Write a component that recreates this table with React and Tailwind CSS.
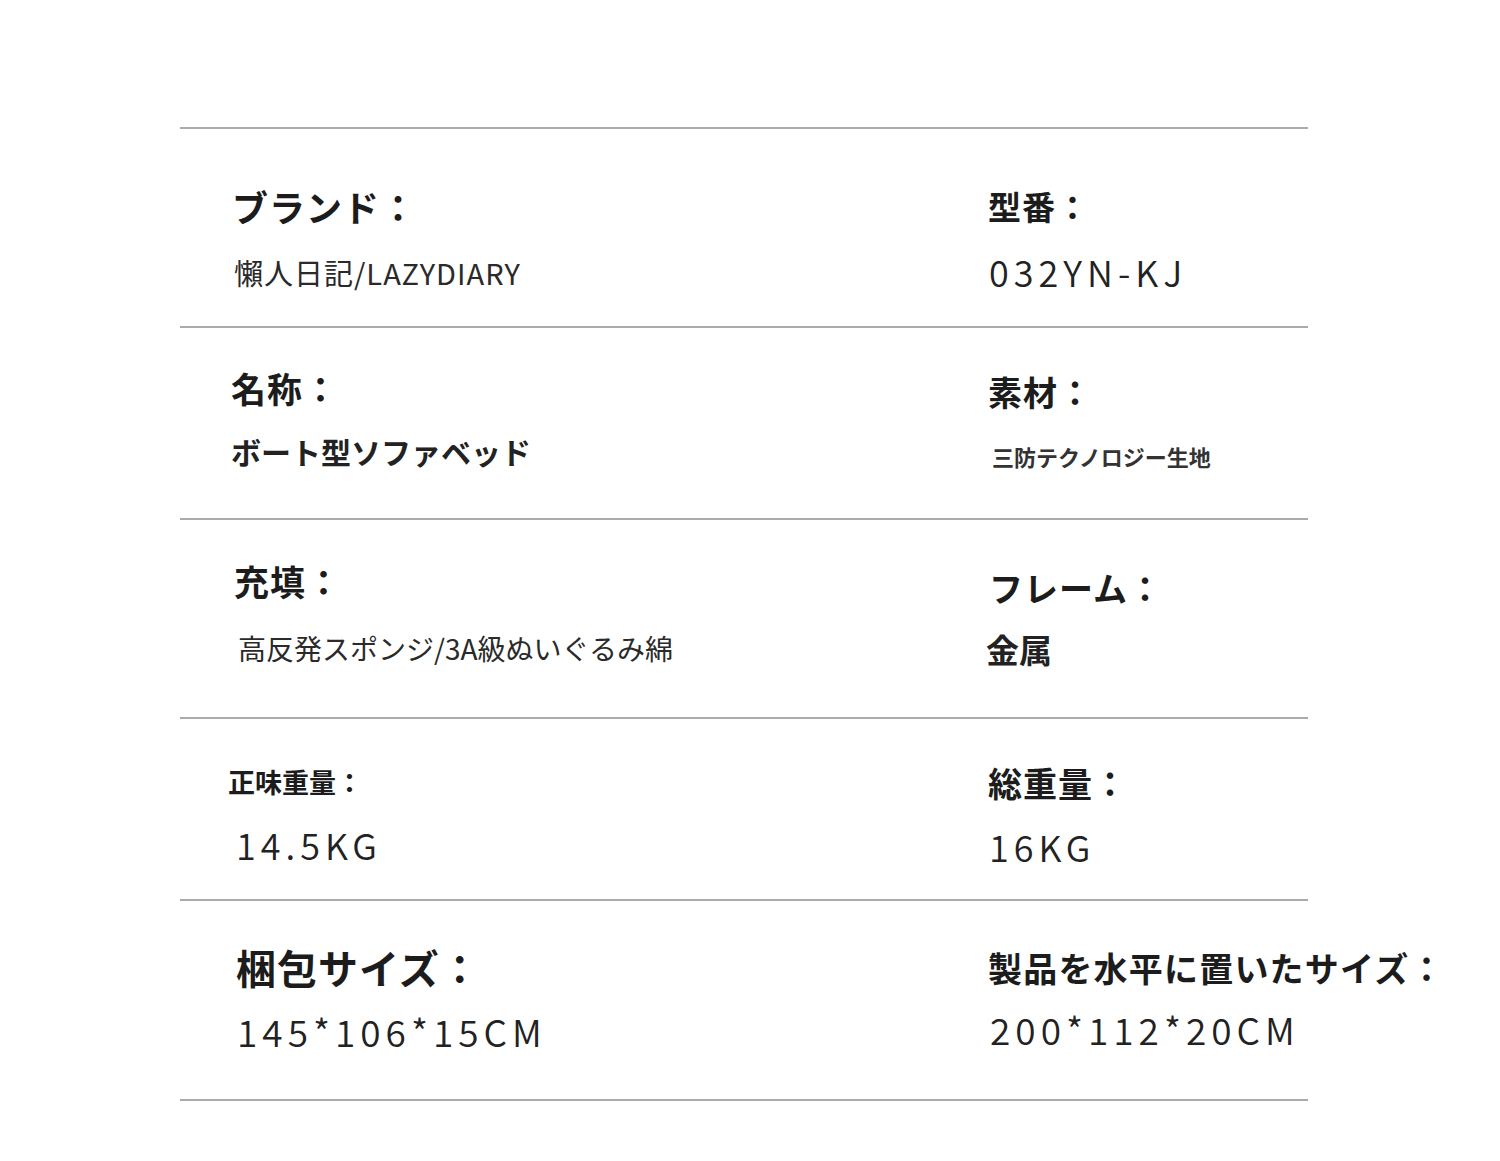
export default function App() {
  const font = { fontFamily: '"Noto Sans CJK JP", "Noto Sans", sans-serif' };
  return (
    <div className="min-h-[1161px] w-[1500px] overflow-hidden bg-white text-[#1c1c1c]" style={font}>
      <div className="ml-[180px] w-[1128px] pt-[127px]">
        {/* Row 1 */}
        <div className="flex h-[199px] border-t-2 border-[#ababab]">
          <div className="flex w-[808px] shrink-0 flex-col pl-[52px] pt-[59px]">
            <div className="text-[36px] font-bold leading-none tracking-[1px]">ブランド：</div>
            <div className="mt-[34px] pl-[2px] text-[29px] leading-none tracking-[1px] text-[#2a2a2a]">懶人日記/LAZYDIARY</div>
          </div>
          <div className="flex flex-col pt-[61px]">
            <div className="text-[33px] font-bold leading-none tracking-[1px]">型番：</div>
            <div className="mt-[30px] pl-[1px] text-[36px] font-[350] leading-none tracking-[5px] text-[#222]">032YN-KJ</div>
          </div>
        </div>
        {/* Row 2 */}
        <div className="flex h-[192px] border-t-2 border-[#ababab]">
          <div className="flex w-[808px] shrink-0 flex-col pl-[51px] pt-[42px]">
            <div className="text-[35px] font-bold leading-none tracking-[1px]">名称：</div>
            <div className="mt-[31px] text-[30px] font-bold leading-none text-[#222]">ボート型ソファベッド</div>
          </div>
          <div className="flex flex-col pt-[47px]">
            <div className="text-[34px] font-bold leading-none tracking-[1px]">素材：</div>
            <div className="mt-[36px] pl-[4px] text-[22px] font-bold leading-none text-[#333]">三防テクノロジー生地</div>
          </div>
        </div>
        {/* Row 3 */}
        <div className="flex h-[199px] border-t-2 border-[#ababab]">
          <div className="flex w-[808px] shrink-0 flex-col pl-[54px] pt-[43px]">
            <div className="text-[35px] font-bold leading-none tracking-[1px]">充填：</div>
            <div className="mt-[36px] pl-[4px] text-[28px] leading-none text-[#2a2a2a]">高反発スポンジ/3A級ぬいぐるみ綿</div>
          </div>
          <div className="flex flex-col pt-[51px]">
            <div className="pl-[1px] text-[34px] font-bold leading-none tracking-[1px]">フレーム：</div>
            <div className="mt-[28px] ml-[-2px] text-[33px] font-bold leading-none text-[#222]">金属</div>
          </div>
        </div>
        {/* Row 4 */}
        <div className="flex h-[182px] border-t-2 border-[#ababab]">
          <div className="flex w-[808px] shrink-0 flex-col pl-[48px] pt-[49px]">
            <div className="text-[27px] font-bold leading-none">正味重量：</div>
            <div className="mt-[31px] pl-[8px] text-[36px] font-[350] leading-none tracking-[5px] text-[#222]">14.5KG</div>
          </div>
          <div className="flex flex-col pt-[47px]">
            <div className="text-[34px] font-bold leading-none tracking-[1px]">総重量：</div>
            <div className="mt-[28px] pl-[1px] text-[36px] font-[350] leading-none tracking-[5px] text-[#222]">16KG</div>
          </div>
        </div>
        {/* Row 5 */}
        <div className="flex h-[202px] border-b-2 border-t-2 border-[#ababab]">
          <div className="flex w-[808px] shrink-0 flex-col pl-[56px] pt-[46px]">
            <div className="text-[40px] font-bold leading-none tracking-[1px]">梱包サイズ：</div>
            <div className="mt-[26px] pl-[1px] text-[37px] font-[350] leading-none tracking-[5px] text-[#222]">145*106*15CM</div>
          </div>
          <div className="flex shrink-0 flex-col pt-[50px]">
            <div className="whitespace-nowrap text-[34px] font-bold leading-none tracking-[1.2px]">製品を水平に置いたサイズ：</div>
            <div className="mt-[26px] pl-[2px] text-[37px] font-[350] leading-none tracking-[5px] text-[#222]">200*112*20CM</div>
          </div>
        </div>
      </div>
    </div>
  );
}
